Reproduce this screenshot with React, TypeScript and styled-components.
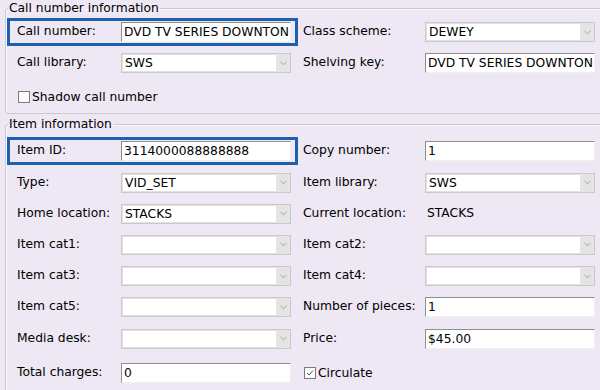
import React from 'react';
import styled, { createGlobalStyle } from 'styled-components';

const GlobalStyle = createGlobalStyle`
  html, body {
    margin: 0;
    padding: 0;
    background: #eee8f4;
  }
  body {
    font-family: "DejaVu Sans", Verdana, sans-serif;
    font-size: 12.3px;
    color: #000;
  }
`;

const Page = styled.div`
  width: 600px;
  height: 390px;
  overflow: hidden;
  background: #eee8f4;
  padding-top: 1px;
  box-sizing: border-box;
`;

const Group = styled.fieldset<{ $top: number; $padTop: number; $padBottom: number }>`
  margin: ${(p) => p.$top}px -14px 0 5px;
  padding: ${(p) => p.$padTop}px 0 ${(p) => p.$padBottom}px 11px;
  border: 1px solid #cdc8d3;
  border-radius: 3px;
  box-shadow: inset 1px 1px 0 #f9f7fb;
  display: flex;
  flex-direction: column;
  gap: 11.2px;
`;

const Legend = styled.legend`
  padding: 0 1px;
  margin-left: -9px;
  line-height: 14px;
`;

const Row = styled.div<{ $extra?: number }>`
  display: flex;
  align-items: center;
  gap: 12px;
  height: 20px;
  margin-top: ${(p) => p.$extra ?? 0}px;
`;

const Field = styled.div<{ $label: number; $hl?: boolean }>`
  display: grid;
  grid-template-columns: ${(p) => p.$label}px 170px;
  align-items: center;
  height: 20px;
  ${(p) =>
    p.$hl &&
    `
    margin: -4px -7px -4px -10px;
    padding: 1px 4px 1px 7px;
    border: 3px solid #1f5fae;
  `}
`;

const Label = styled.span`
  white-space: nowrap;
  padding-bottom: 2px;
`;

const TextBox = styled.div`
  box-sizing: border-box;
  height: 20px;
  background: #fff;
  border-top: 1px solid #8e8e8e;
  border-left: 1px solid #8e8e8e;
  border-right: 1px solid #f0f0f0;
  border-bottom: 1px solid #f0f0f0;
  padding: 0 2px;
  line-height: 18px;
  white-space: nowrap;
  overflow: hidden;
`;

const SelectBox = styled.div`
  box-sizing: border-box;
  height: 20px;
  background: #fff;
  border: 1px solid #c9c9c9;
  box-shadow: inset 0 0 0 1px #e2e2e2;
  display: flex;
  align-items: stretch;
`;

const SelectValue = styled.span`
  flex: 1;
  padding: 0 3px;
  line-height: 18px;
  white-space: nowrap;
  overflow: hidden;
`;

const Arrow = styled.span`
  width: 14px;
  background: #e4e4e4;
  display: flex;
  align-items: center;
  justify-content: center;
`;

const StaticValue = styled.span`
  padding-left: 2px;
  padding-bottom: 2px;
`;

const CheckRow = styled.label`
  display: flex;
  align-items: center;
  gap: 2px;
  margin-left: 1px;
`;

const CheckBox = styled.span`
  box-sizing: border-box;
  width: 12px;
  height: 12px;
  border: 1px solid #7a7a7a;
  background: #fbfbfb;
  display: flex;
  align-items: center;
  justify-content: center;
`;

const Chevron = () => (
  <svg width="7" height="5" viewBox="0 0 7 5">
    <path d="M0.5 0.8 L3.5 3.8 L6.5 0.8" fill="none" stroke="#a3a3a3" strokeWidth="1" />
  </svg>
);

const Select = ({ value }: { value?: string }) => (
  <SelectBox>
    <SelectValue>{value}</SelectValue>
    <Arrow>
      <Chevron />
    </Arrow>
  </SelectBox>
);

const Check = ({ checked, label }: { checked?: boolean; label: string }) => (
  <CheckRow>
    <CheckBox>
      {checked && (
        <svg width="8" height="8" viewBox="0 0 8 8">
          <path d="M1 4 L3 6 L7 1.5" fill="none" stroke="#555" strokeWidth="1" />
        </svg>
      )}
    </CheckBox>
    <span>{label}</span>
  </CheckRow>
);

const L = 104;
const R = 122;

export default function App() {
  return (
    <Page>
      <GlobalStyle />
      <Group $top={0} $padTop={7} $padBottom={6}>
        <Legend>Call number information</Legend>
        <Row>
          <Field $label={L} $hl>
            <Label>Call number:</Label>
            <TextBox>DVD TV SERIES DOWNTON</TextBox>
          </Field>
          <Field $label={R}>
            <Label>Class scheme:</Label>
            <Select value="DEWEY" />
          </Field>
        </Row>
        <Row>
          <Field $label={L}>
            <Label>Call library:</Label>
            <Select value="SWS" />
          </Field>
          <Field $label={R}>
            <Label>Shelving key:</Label>
            <TextBox>DVD TV SERIES DOWNTON</TextBox>
          </Field>
        </Row>
        <Row $extra={3}>
          <Check label="Shadow call number" />
        </Row>
      </Group>
      <Group $top={3} $padTop={10} $padBottom={10}>
        <Legend>Item information</Legend>
        <Row>
          <Field $label={L} $hl>
            <Label>Item ID:</Label>
            <TextBox>3114000088888888</TextBox>
          </Field>
          <Field $label={R}>
            <Label>Copy number:</Label>
            <TextBox>1</TextBox>
          </Field>
        </Row>
        <Row>
          <Field $label={L}>
            <Label>Type:</Label>
            <Select value="VID_SET" />
          </Field>
          <Field $label={R}>
            <Label>Item library:</Label>
            <Select value="SWS" />
          </Field>
        </Row>
        <Row>
          <Field $label={L}>
            <Label>Home location:</Label>
            <Select value="STACKS" />
          </Field>
          <Field $label={R}>
            <Label>Current location:</Label>
            <StaticValue>STACKS</StaticValue>
          </Field>
        </Row>
        <Row>
          <Field $label={L}>
            <Label>Item cat1:</Label>
            <Select />
          </Field>
          <Field $label={R}>
            <Label>Item cat2:</Label>
            <Select />
          </Field>
        </Row>
        <Row>
          <Field $label={L}>
            <Label>Item cat3:</Label>
            <Select />
          </Field>
          <Field $label={R}>
            <Label>Item cat4:</Label>
            <Select />
          </Field>
        </Row>
        <Row>
          <Field $label={L}>
            <Label>Item cat5:</Label>
            <Select />
          </Field>
          <Field $label={R}>
            <Label>Number of pieces:</Label>
            <TextBox>1</TextBox>
          </Field>
        </Row>
        <Row>
          <Field $label={L}>
            <Label>Media desk:</Label>
            <Select />
          </Field>
          <Field $label={R}>
            <Label>Price:</Label>
            <TextBox>$45.00</TextBox>
          </Field>
        </Row>
        <Row $extra={3}>
          <Field $label={L}>
            <Label>Total charges:</Label>
            <TextBox>0</TextBox>
          </Field>
          <Check checked label="Circulate" />
        </Row>
      </Group>
    </Page>
  );
}
